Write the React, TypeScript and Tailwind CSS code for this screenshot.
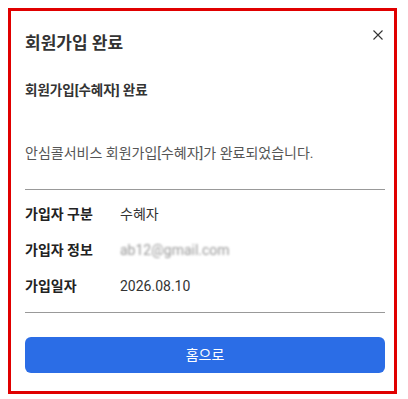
import React from 'react';

const font = { fontFamily: 'Roboto, "Noto Sans CJK KR", sans-serif' };

const rows = [
  { label: '가입자 구분', value: '수혜자' },
  { label: '가입자 정보', value: 'ab12@gmail.com', blurred: true },
  { label: '가입일자', value: '2026.08.10' },
];

const App: React.FC = () => {
  return (
    <div className="min-h-[399px] w-[408px] bg-white pt-[8px] pl-[8px]" style={font}>
      <div className="flex h-[386px] w-[389px] flex-col border-[3px] border-[#e00000] bg-white pl-[14px] pr-[9px] pt-[19px]">
        {/* header */}
        <div className="flex h-[26px] items-start justify-between">
          <h1 className="text-[17px] font-bold leading-[26px] text-[#333]">회원가입 완료</h1>
          <button className="mr-[2px] mt-0 text-[#333]">
            <svg width="10" height="10" viewBox="0 0 10 10" fill="none" stroke="currentColor" strokeWidth="1.1">
              <path d="M0.5 0.5 L9.5 9.5 M9.5 0.5 L0.5 9.5" />
            </svg>
          </button>
        </div>

        <h2 className="mt-[24px] text-[13.5px] font-bold leading-[20px] text-[#333]">회원가입[수혜자] 완료</h2>
        <p className="mt-[43px] text-[14px] leading-[20px] text-[#555]">
          안심콜서비스 회원가입[수혜자]가 완료되었습니다.
        </p>

        <div className="mt-[26px] border-t border-[#999]" />

        <div className="mt-[6px] flex flex-col">
          {rows.map((row) => (
            <div key={row.label} className="flex h-[36px] items-center">
              <span className="w-[95px] text-[14px] font-bold text-[#222]">{row.label}</span>
              {row.blurred ? (
                <span className="text-[14px] text-[#999] blur-[1px]">{row.value}</span>
              ) : (
                <span className="text-[14px] text-[#333]">{row.value}</span>
              )}
            </div>
          ))}
        </div>

        <div className="mt-[8px] border-t border-[#999]" />

        <button className="mt-[24px] h-[36px] w-full rounded-[6px] bg-[#2b6de6] text-[14px] text-white">
          홈으로
        </button>
      </div>
    </div>
  );
};

export default App;
